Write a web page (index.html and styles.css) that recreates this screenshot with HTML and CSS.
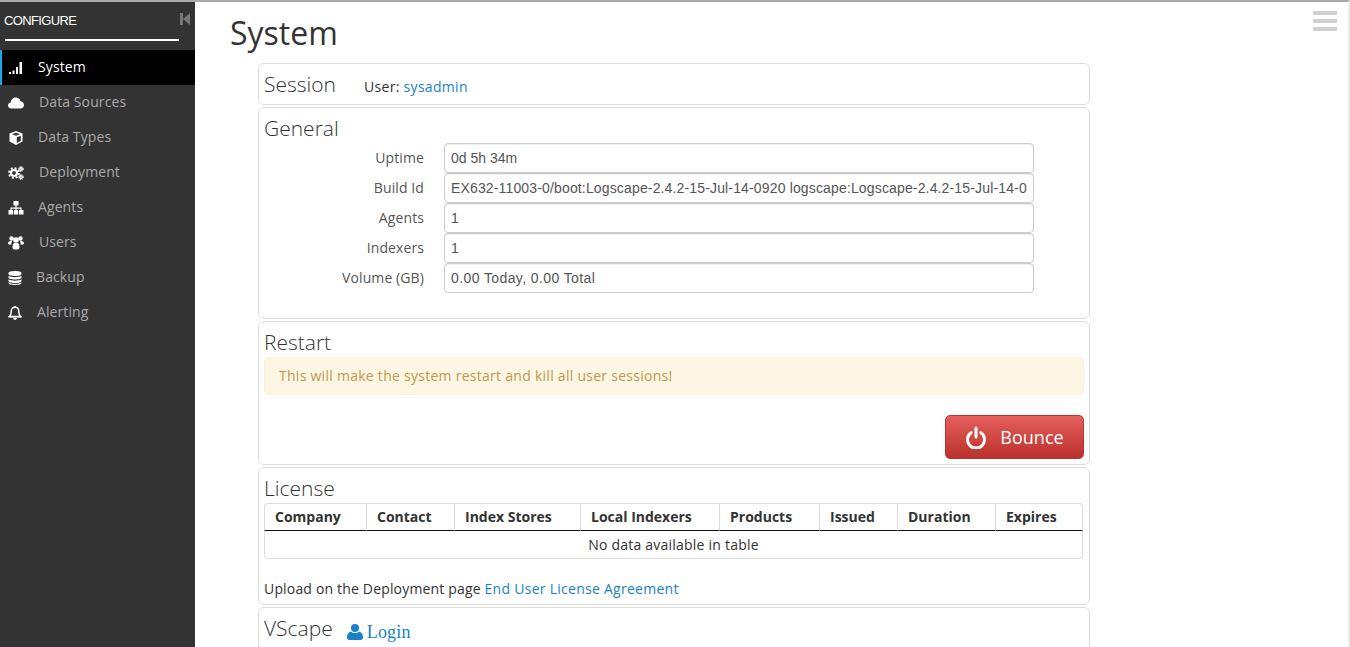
FILE: index.html
```html
<!DOCTYPE html>
<html>
<head>
  <meta charset="UTF-8">
  <title>System</title>
  <link rel="stylesheet" href="styles.css">
</head>
<body>
  <div class="app">
    <div class="sidebar">
      <div class="side-head">
        <span class="side-title">CONFIGURE</span>
        <svg class="collapse" width="10" height="12" viewBox="0 0 10 12"><path d="M0 0h3v12H0zM10 0v12L3 6z" fill="#777"/></svg>
      </div>
      <ul class="menu">
        <li class="active">
          <svg class="ico" width="16" height="14" viewBox="0 0 16 14"><path d="M1 11h2v2H1zM4.500 9.500h2V13h-2zM8 6h2v7H8zM11.500 1H14v12h-2.500z" fill="#fff"/></svg>
          <span class="lbl-system">System</span>
        </li>
        <li>
          <svg class="ico" width="16" height="14" viewBox="0 0 16 14"><path d="M3.500 12.500C1.500 12.500 0 11.200 0 9.500c0-1.500 1-2.700 2.500-3C3 3.500 5 1.500 7.700 1.500c2.400 0 4.300 1.500 4.900 3.800 2 .3 3.400 2 3.400 3.900 0 1.900-1.500 3.300-3.500 3.300z" fill="#fff"/></svg>
          <span class="lbl-sources">Data Sources</span>
        </li>
        <li>
          <svg class="ico" width="16" height="14" viewBox="0 0 16 14"><path d="M8 0l6.500 2.500v8L8 14l-6.500-3.500v-8zM8 1.800L4 3.300l4 1.500 4-1.500zM8.800 6.200v5.800l4-2.200V4.700z" fill="#fff" fill-rule="evenodd"/></svg>
          <span class="lbl-types">Data Types</span>
        </li>
        <li>
          <svg class="ico" width="16" height="14" viewBox="0 0 16 14" fill="none" stroke="#fff"><circle cx="6" cy="7" r="3" stroke-width="2.200"/><circle cx="6" cy="7" r="5" stroke-width="1.800" stroke-dasharray="2 1.930"/><circle cx="13" cy="3" r="1.300" stroke-width="1.400"/><circle cx="13" cy="3" r="2.500" stroke-width="1" stroke-dasharray="1 1"/><circle cx="13" cy="11" r="1.300" stroke-width="1.400"/><circle cx="13" cy="11" r="2.500" stroke-width="1" stroke-dasharray="1 1"/></svg>
          <span class="lbl-deploy">Deployment</span>
        </li>
        <li>
          <svg class="ico" width="16" height="14" viewBox="0 0 16 14"><path d="M5.500 0h5v4.500h-5zM7.400 4.500h1.200v2h5V9h-1.200V7.700H8.600V9H7.400V7.700H3.600V9H2.400V6.500h5z" fill="#fff"/><path d="M.500 9h4.500v4.500H.500zM5.800 9h4.400v4.500H5.800zM11 9h4.500v4.500H11z" fill="#fff"/></svg>
          <span class="lbl-agents">Agents</span>
        </li>
        <li>
          <svg class="ico" width="16" height="14" viewBox="0 0 16 14"><circle cx="3.500" cy="2.500" r="2.200" fill="#fff"/><circle cx="12.500" cy="2.500" r="2.200" fill="#fff"/><circle cx="8" cy="4" r="2.800" fill="#fff"/><path d="M0 8c0-2 1-3 2.500-3H4c-.5 1-.6 2-.5 3.500H1C.4 8.500 0 8.300 0 8zM16 8c0-2-1-3-2.500-3H12c.5 1 .6 2 .5 3.500H15c.6 0 1-.2 1-.5zM4.500 11c0-2.500 1-4 2-4h3c1 0 2 1.500 2 4 0 1.500-.8 2.500-1.800 2.500H6.300c-1 0-1.800-1-1.800-2.500z" fill="#fff"/></svg>
          <span class="lbl-users">Users</span>
        </li>
        <li>
          <svg class="ico" width="16" height="14" viewBox="0 0 16 14"><path d="M.500 2C.500.800 3.500 0 7 0s6.500.800 6.500 2v1c0 1.200-3 2-6.500 2S.500 4.200.500 3zM.500 4.800C1.800 5.800 4.500 6.200 7 6.200s5.200-.4 6.500-1.400V6.500c0 1.200-3 2-6.500 2S.500 7.700.500 6.500zM.500 8.300C1.800 9.300 4.500 9.700 7 9.700s5.200-.4 6.500-1.400V10c0 1.200-3 2-6.500 2S.500 11.200.500 10zM.500 11.600C1.800 12.400 4.500 12.900 7 12.900s5.200-.5 6.500-1.300v.4c0 1.200-3 2-6.500 2S.500 13.200.500 12z" fill="#fff"/></svg>
          <span class="lbl-backup">Backup</span>
        </li>
        <li>
          <svg class="ico" width="16" height="14" viewBox="0 0 16 14"><path d="M7 1.300c2.500 0 3.800 1.800 3.800 4.200 0 2.500.7 3.900 1.700 5H1.500c1-1.100 1.700-2.500 1.700-5C3.200 3.100 4.500 1.300 7 1.300z" fill="none" stroke="#fff" stroke-width="1.500"/><path d="M.500 10h13v1.500H.500zM5.200 12h3.600c0 1.100-.8 2-1.800 2s-1.800-.9-1.800-2zM6.200 0h1.600v1.500H6.200z" fill="#fff"/></svg>
          <span class="lbl-alerting">Alerting</span>
        </li>
      </ul>
    </div>

    <div class="main">
      <h1>System</h1>
      <div class="burger"><span></span><span></span><span></span></div>

      <div class="panels">
        <div class="panel session">
          <h3>Session</h3>
          <span class="user">User: <a href="#">sysadmin</a></span>
        </div>

        <div class="panel general">
          <h3>General</h3>
          <div class="field"><label>Uptime</label><div class="value">0d 5h 34m</div></div>
          <div class="field"><label>Build Id</label><div class="value build">EX632-11003-0/boot:Logscape-2.4.2-15-Jul-14-0920 logscape:Logscape-2.4.2-15-Jul-14-0</div></div>
          <div class="field"><label>Agents</label><div class="value">1</div></div>
          <div class="field"><label>Indexers</label><div class="value">1</div></div>
          <div class="field"><label>Volume (GB)</label><div class="value volume">0.00 Today, 0.00 Total</div></div>
        </div>

        <div class="panel restart">
          <h3>Restart</h3>
          <div class="alert">This will make the system restart and kill all user sessions!</div>
          <div class="actions">
            <button class="bounce" type="button">
              <svg width="22" height="23" viewBox="0 0 22 23"><path d="M6.300 6.500a8.500 8.500 0 1 0 9.400 0" fill="none" stroke="#fff" stroke-width="3" stroke-linecap="round"/><path d="M11 2v9" fill="none" stroke="#fff" stroke-width="3" stroke-linecap="round"/></svg>
              Bounce
            </button>
          </div>
        </div>

        <div class="panel license">
          <h3>License</h3>
          <table>
            <thead>
              <tr>
                <th class="c-company">Company</th>
                <th class="c-contact">Contact</th>
                <th class="c-stores">Index Stores</th>
                <th class="c-local">Local Indexers</th>
                <th class="c-products">Products</th>
                <th class="c-issued">Issued</th>
                <th class="c-duration">Duration</th>
                <th>Expires</th>
              </tr>
            </thead>
            <tbody>
              <tr><td colspan="8">No data available in table</td></tr>
            </tbody>
          </table>
          <p class="upload">Upload on the Deployment page <a href="#">End User License Agreement</a></p>
        </div>

        <div class="panel vscape">
          <h3>VScape</h3>
          <a class="login" href="#">
            <svg width="16" height="16" viewBox="0 0 16 16"><circle cx="8" cy="4" r="4" fill="#1a82c4"/><path d="M0 13.500C0 10 1.500 8 4 7.500c1 1 2.500 1.500 4 1.500s3-.5 4-1.500c2.500.5 4 2.500 4 6 0 1.500-1 2.500-2.500 2.500h-11C1 16 0 15 0 13.500z" fill="#1a82c4"/></svg>
            Login
          </a>
        </div>
      </div>
    </div>
  </div>
</body>
</html>
```

FILE: styles.css
```css
html, body {
  height: 100%;
  margin: 0;
  overflow: hidden;
}

body {
  font-family: "Open Sans", Arial, sans-serif;
  font-size: 14px;
  color: #333;
  background: white;
  border-top: 2px solid #aaa;
  border-right: 2px solid #eee;
  box-sizing: border-box;
}

a {
  color: #1a82c4;
  text-decoration: none;
}

.app {
  display: flex;
  height: 100%;
}

.sidebar {
  width: 195px;
  flex-shrink: 0;
  background: #333;
}

.side-head {
  display: flex;
  justify-content: space-between;
  align-items: center;
  height: 37px;
  margin: 0 16px 9px 5px;
  border-bottom: 2px solid white;
  position: relative;
}

.side-title {
  font-family: "Liberation Sans", Arial, sans-serif;
  font-size: 13px;
  letter-spacing: -0.65px;
  color: white;
  margin-left: -1px;
}

.collapse {
  position: absolute;
  right: -11px;
  top: 11px;
}

.menu {
  list-style: none;
  margin: 0;
  padding: 0;
}

.menu li {
  display: flex;
  align-items: center;
  height: 35px;
  padding-left: 8px;
  color: #aaa;
  letter-spacing: 0.1px;
}

.menu li span {
  margin-top: -2px;
}

.menu li.active {
  background: black;
  color: white;
  border-left: 2px solid #1ea7e8;
  padding-left: 6px;
}

.ico {
  flex-shrink: 0;
}

/* the icons are not all one width in the original, so the labels don't line up */
.lbl-system { margin-left: 14px; }
.lbl-sources { margin-left: 15px; }
.lbl-types { margin-left: 14px; }
.lbl-deploy { margin-left: 15px; }
.lbl-agents { margin-left: 14px; }
.lbl-users { margin-left: 15px; }
.lbl-backup { margin-left: 12px; }
.lbl-alerting { margin-left: 13px; }

.main {
  flex: 1;
  position: relative;
  padding-left: 35px;
}

h1 {
  margin: 10px 0 10px;
  font-size: 32px;
  font-weight: 400;
  line-height: 41px;
  color: #333;
}

.burger {
  position: absolute;
  top: 9px;
  right: 11px;
  width: 24px;
  display: flex;
  flex-direction: column;
  gap: 4px;
}

.burger span {
  height: 4px;
  background: #d0d0d0;
}

.panels {
  margin-left: 28px;
  width: 832px;
  display: flex;
  flex-direction: column;
  gap: 2px;
}

.panel {
  border: 1px solid #ddd;
  border-radius: 6px;
  padding: 0 5px;
  box-sizing: border-box;
}

h3 {
  margin: 0;
  font-size: 21px;
  font-weight: 300;
  line-height: 27px;
  color: #333;
}

.session {
  height: 42px;
  display: flex;
  align-items: center;
}

.user {
  margin-left: 28px;
  margin-top: 5px;
  letter-spacing: 0.3px;
}

.general {
  height: 212px;
  padding-top: 7px;
}

.general h3 {
  margin-bottom: 1px;
}

.field {
  display: flex;
  align-items: center;
  height: 30px;
}

.field label {
  width: 160px;
  margin-top: -2px;
  margin-right: 20px;
  text-align: right;
  color: #555;
  letter-spacing: 0.1px;
}

.value {
  width: 590px;
  height: 30px;
  box-sizing: border-box;
  border: 1px solid #ccc;
  border-radius: 4px;
  padding: 0 6px;
  font-family: "Liberation Sans", Arial, sans-serif;
  font-size: 14px;
  line-height: 28px;
  color: #555;
  white-space: nowrap;
  box-shadow: inset 0 1px 1px rgba(0, 0, 0, 0.075);
}

.build { letter-spacing: 0.15px; }
.volume { letter-spacing: 0.4px; }

.restart {
  height: 144px;
  padding-top: 7px;
}

.alert {
  height: 38px;
  box-sizing: border-box;
  margin-top: 1px;
  padding: 0 14px;
  line-height: 36px;
  background: #fdf6e3;
  border: 1px solid #f9f1dc;
  border-radius: 4px;
  color: #c09853;
  letter-spacing: 0.27px;
}

.actions {
  display: flex;
  justify-content: flex-end;
  margin-top: 20px;
}

.bounce {
  display: flex;
  align-items: center;
  justify-content: center;
  gap: 13px;
  width: 139px;
  height: 44px;
  padding: 0;
  border: 1px solid #b33;
  border-radius: 5px;
  background: linear-gradient(#e55f5c, #bb312c);
  color: white;
  font-family: "Open Sans", Arial, sans-serif;
  font-size: 18px;
}

.license {
  height: 138px;
  padding-top: 7px;
}

table {
  width: 819px;
  margin-top: 1px;
  border-collapse: separate;
  border-spacing: 0;
}

th {
  height: 28px;
  box-sizing: border-box;
  padding: 0 10px 2px;
  text-align: left;
  font-size: 14px;
  font-weight: 700;
  color: #333;
  border-top: 1px solid #ddd;
  border-left: 1px solid #ddd;
  border-bottom: 1px solid #111;
}

th:last-child {
  border-right: 1px solid #ddd;
  border-top-right-radius: 4px;
}

th:first-child {
  border-top-left-radius: 4px;
}

.c-company { width: 102px; }
.c-contact { width: 88px; }
.c-stores { width: 126px; }
.c-local { width: 139px; }
.c-products { width: 100px; }
.c-issued { width: 78px; }
.c-duration { width: 98px; }

td {
  height: 28px;
  box-sizing: border-box;
  text-align: center;
  border: 1px solid #ddd;
  border-top: none;
  border-radius: 0 0 4px 4px;
  letter-spacing: 0.22px;
}

.upload {
  margin: 20px 0 0;
  line-height: 20px;
  letter-spacing: 0.17px;
}

.upload a {
  letter-spacing: 0.27px;
}

.vscape {
  height: 60px;
  padding-top: 7px;
  display: flex;
  align-items: flex-start;
}

.login {
  display: flex;
  align-items: center;
  gap: 4px;
  margin-left: 14px;
  margin-top: 7px;
  font-family: "Liberation Serif", "Times New Roman", serif;
  font-size: 18px;
  letter-spacing: 0.2px;
}

.login svg {
  margin-top: -2px;
}
```
